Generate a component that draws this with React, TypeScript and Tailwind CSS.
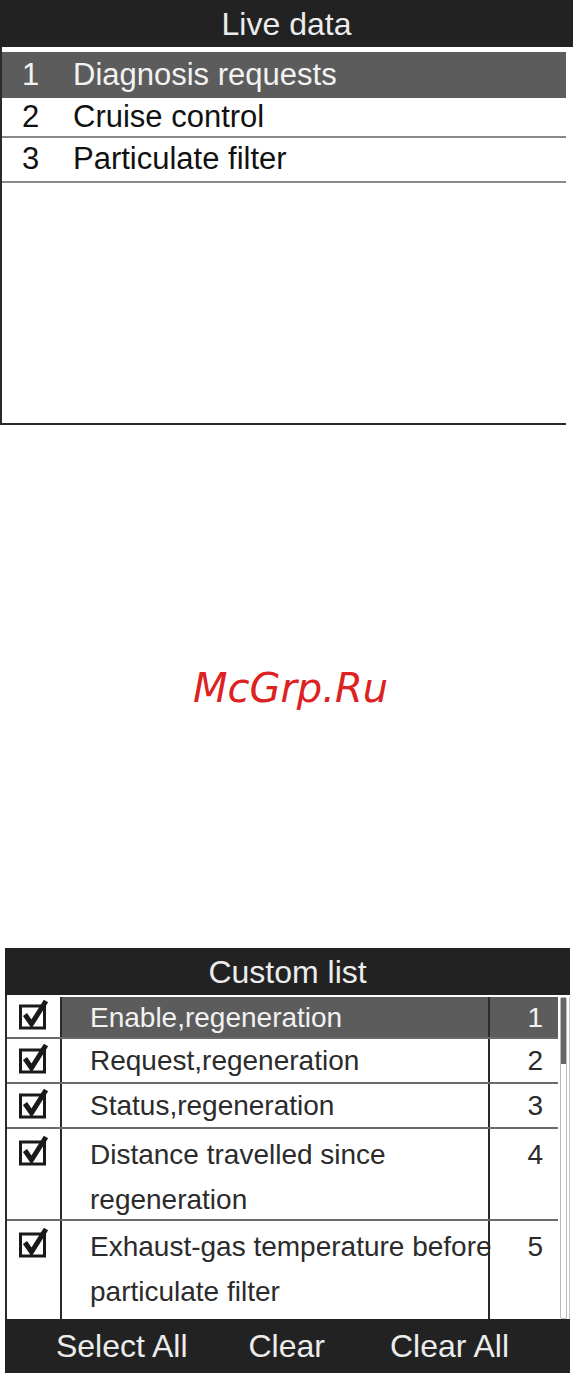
import React from 'react';

const sans = { fontFamily: '"Liberation Sans", Arial, sans-serif' };

const liveRows = [
    { n: 1, label: 'Diagnosis requests' },
    { n: 2, label: 'Cruise control' },
    { n: 3, label: 'Particulate filter' },
];

const customRows = [
    { n: 1, lines: ['Enable,regeneration'], h: 'h-[42px]' },
    { n: 2, lines: ['Request,regeneration'], h: 'h-[45px]' },
    { n: 3, lines: ['Status,regeneration'], h: 'h-[45px]' },
    { n: 4, lines: ['Distance travelled since', 'regeneration'], h: 'h-[92px]' },
    { n: 5, lines: ['Exhaust-gas temperature before', 'particulate filter'], h: 'h-[98px]' },
];

const CheckBox: React.FC = () => (
    <svg width="32" height="32" viewBox="0 0 32 32">
        <rect x="2.5" y="8" width="24" height="22" fill="none" stroke="#1a1a1a" strokeWidth="3" />
        <polyline points="7,16.5 13.5,26 28,3" fill="none" stroke="#1a1a1a" strokeWidth="5" strokeLinejoin="miter" />
    </svg>
);

const LiveDataPanel: React.FC = () => (
    <div className="w-full">
        <div className="h-[47px] bg-[#222222] flex items-center justify-center text-[32px] text-[#ececec]">
            Live data
        </div>
        <div className="h-[378px] bg-white border-l-2 border-b-2 border-[#2a2a2a] mr-[7px] pt-[5px]">
            {liveRows.map((row, i) => {
                const selected = i === 0;
                const h = i === 0 ? 'h-[46px]' : i === 1 ? 'h-[40px] border-b-2 border-[#8a8a8a]' : 'h-[45px] border-b-2 border-[#8a8a8a]';
                return (
                    <div
                        key={row.n}
                        className={`flex items-center text-[31px] ${h} ${selected ? 'bg-[#5c5c5c] text-[#f2f2f2]' : 'text-[#111111]'}`}
                    >
                        <span className="w-[71px] pl-[20px]">{row.n}</span>
                        <span>{row.label}</span>
                    </div>
                );
            })}
        </div>
    </div>
);

const CustomListPanel: React.FC = () => (
    <div className="ml-[5px] w-[565px]">
        <div className="h-[47px] bg-[#222222] flex items-center justify-center text-[32px] text-[#ececec]">
            Custom list
        </div>
        <div className="flex bg-white border-l-2 border-[#2a2a2a] pt-[2px]">
            <div className="flex-1">
                {customRows.map((row, i) => {
                    const selected = i === 0;
                    const last = i === customRows.length - 1;
                    return (
                        <div
                            key={row.n}
                            className={`flex text-[28px] text-[#2b2b2b] ${row.h} ${last ? '' : 'border-b-2 border-[#6a6a6a]'}`}
                        >
                            <div className="w-[55px] border-r-2 border-[#2a2a2a] flex justify-center">
                                <div className={`flex items-center -mt-[3px] ${row.lines.length > 1 ? 'h-[48px]' : 'h-full'}`}>
                                    <CheckBox />
                                </div>
                            </div>
                            <div
                                className={`w-[428px] border-r-2 border-[#2a2a2a] pl-[28px] ${selected ? 'bg-[#5c5c5c] text-[#f2f2f2]' : ''} ${row.lines.length > 1 ? 'pt-[3px]' : 'flex items-center'}`}
                            >
                                <div>
                                    {row.lines.map((line) => (
                                        <div key={line} className="whitespace-nowrap leading-[45px]">{line}</div>
                                    ))}
                                </div>
                            </div>
                            <div
                                className={`flex-1 pr-[15px] text-right ${selected ? 'bg-[#5c5c5c] text-[#f2f2f2]' : ''} ${row.lines.length > 1 ? 'pt-[3px]' : 'flex items-center justify-end'}`}
                            >
                                <span className="leading-[45px]">{row.n}</span>
                            </div>
                        </div>
                    );
                })}
            </div>
            <div className="w-[12px] flex justify-center border-r border-[#c8c8c8]">
                <div className="w-[7px] border border-[#b8b8b8] rounded-[2px]">
                    <div className="h-[66px] bg-[#666666]" />
                </div>
            </div>
        </div>
        <div className="h-[54px] bg-[#222222] flex items-center justify-evenly text-[32px] text-[#ececec]">
            <span className="-ml-[10px]">Select All</span>
            <span>Clear</span>
            <span className="ml-[4px]">Clear All</span>
        </div>
    </div>
);

const App: React.FC = () => {
    return (
        <div className="w-[573px] h-[1373px] bg-white overflow-hidden" style={sans}>
            <LiveDataPanel />
            <div
                className="mt-[241px] h-[44px] leading-[44px] text-center text-[40px] italic text-[#dd2222] pl-[8px]"
                style={{ fontFamily: '"DejaVu Sans", sans-serif' }}
            >
                McGrp.Ru
            </div>
            <div className="mt-[238px]">
                <CustomListPanel />
            </div>
        </div>
    );
};

export default App;
